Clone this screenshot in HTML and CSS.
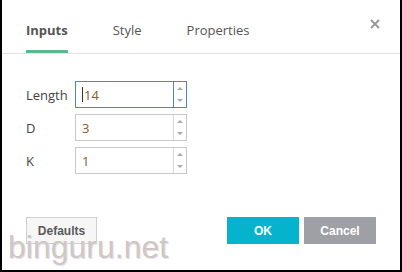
FILE: index.html
```html
<!DOCTYPE html>
<html>
<head>
    <title>Inputs</title>
    <link rel="stylesheet" href="styles.css">
</head>
<body>
    <div class="dialog">
        <div class="tabs">
            <span class="tab active">Inputs</span>
            <span class="tab">Style</span>
            <span class="tab">Properties</span>
            <span class="close">
                <svg width="10" height="10" viewBox="0 0 10 10">
                    <path d="M1 1L9 9M9 1L1 9" stroke="#9a9a9a" stroke-width="2"/>
                </svg>
            </span>
        </div>

        <div class="fields">
            <div class="row">
                <label>Length</label>
                <div class="spin focused">
                    <span class="value"><span class="caret"></span>14</span>
                    <span class="arrows"><i class="up"></i><i class="down"></i></span>
                </div>
            </div>
            <div class="row">
                <label>D</label>
                <div class="spin">
                    <span class="value">3</span>
                    <span class="arrows"><i class="up"></i><i class="down"></i></span>
                </div>
            </div>
            <div class="row">
                <label>K</label>
                <div class="spin">
                    <span class="value">1</span>
                    <span class="arrows"><i class="up"></i><i class="down"></i></span>
                </div>
            </div>
        </div>

        <div class="footer">
            <button class="btn defaults">Defaults</button>
            <div class="right">
                <button class="btn ok">OK</button>
                <button class="btn cancel">Cancel</button>
            </div>
        </div>

        <div class="watermark">binguru.net</div>
    </div>
</body>
</html>
```

FILE: styles.css
```css
body {
    margin: 0;
    font-family: "Open Sans", Arial, sans-serif;
    background-color: #fff;
}
.dialog {
    position: relative;
    width: 402px;
    height: 272px;
    box-sizing: border-box;
    border-left: 2px solid #000;
    border-right: 2px solid #000;
    border-bottom: 2px solid #000;
    background-color: #fff;
}
.tabs {
    display: flex;
    align-items: flex-end;
    height: 54px;
    padding-left: 24px;
    border-bottom: 1px solid #e2e2e2;
    box-sizing: border-box;
}
.tab {
    font-size: 13px;
    color: #555;
    padding-bottom: 11px;
    margin-right: 45px;
    border-bottom: 3px solid transparent;
    line-height: 18px;
}
.tab.active {
    font-weight: bold;
    color: #555;
    border-bottom-color: #5cb88a;
}
.close {
    position: absolute;
    right: 20px;
    top: 19px;
    display: flex;
}
.fields {
    padding: 27px 0 0 24px;
    display: flex;
    flex-direction: column;
    gap: 6px;
}
.row {
    display: flex;
    align-items: center;
    height: 27px;
}
.row label {
    width: 49px;
    font-size: 13px;
    color: #444;
    padding-top: 1px;
}
.spin {
    display: flex;
    width: 112px;
    height: 27px;
    box-sizing: border-box;
    border: 1px solid #c8c8c8;
}
.spin.focused {
    border-color: #4a86cf;
}
.value {
    flex: 1;
    display: flex;
    align-items: center;
    padding-left: 6px;
    font-size: 13px;
    color: #8a5a2b;
}
.caret {
    display: inline-block;
    width: 1px;
    height: 15px;
    background-color: #333;
    margin-right: 1px;
}
.arrows {
    width: 12px;
    display: flex;
    flex-direction: column;
    border-left: 1px solid #d6d6d6;
}
.focused .arrows {
    border-left-color: #4a86cf;
}
.arrows i {
    flex: 1;
    display: flex;
    align-items: center;
    justify-content: center;
}
.arrows i::after {
    content: "";
    border-left: 3px solid transparent;
    border-right: 3px solid transparent;
}
.arrows .up::after {
    border-bottom: 3px solid #aaa;
}
.arrows .down::after {
    border-top: 3px solid #aaa;
}
.footer {
    display: flex;
    justify-content: space-between;
    padding: 0 24px;
    margin-top: 43px;
}
.right {
    display: flex;
    gap: 5px;
}
.btn {
    height: 27px;
    width: 72px;
    font-family: Arial, "Liberation Sans", sans-serif;
    font-size: 12px;
    font-weight: bold;
    border: none;
    color: #fff;
    padding: 0;
}
.defaults {
    width: 71px;
    background-color: #f6f6f6;
    border: 1px solid #cfcfcf;
    color: #5a5a5a;
}
.ok {
    background-color: #06b3cd;
}
.cancel {
    background-color: #9ea0a6;
}
.watermark {
    position: absolute;
    left: 6px;
    top: 229px;
    font-family: "Liberation Sans", Arial, sans-serif;
    font-size: 32px;
    color: #cfc7c0;
    text-shadow: 1px 1px 0 #e4e0f0;
    line-height: 36px;
}
```
